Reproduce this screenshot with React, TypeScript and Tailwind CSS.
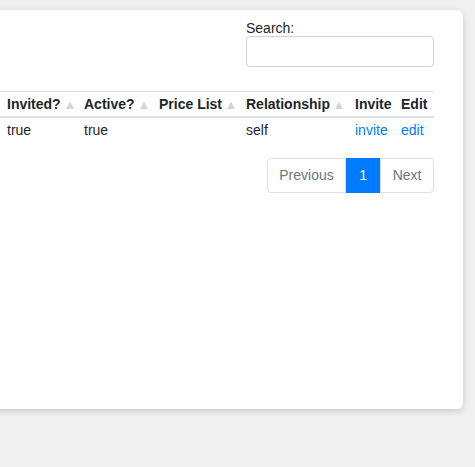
import React from "react";

const font = { fontFamily: '"Liberation Sans", Arial, sans-serif' };

function SortArrow() {
  return (
    <svg width="8" height="8" viewBox="0 0 8 8" className="ml-[5px] mt-[1px] inline-block shrink-0">
      <path d="M4 0.5 L8 8 L0 8 Z" fill="#d4d4d4" />
    </svg>
  );
}

interface Col {
  label: string;
  width: string;
  sortable: boolean;
  first?: boolean;
}

const columns: Col[] = [
  { label: "Invited?", width: "w-[79px]", sortable: true, first: true },
  { label: "Active?", width: "w-[75px]", sortable: true },
  { label: "Price List", width: "w-[87px]", sortable: true },
  { label: "Relationship", width: "w-[109px]", sortable: true },
  { label: "Invite", width: "w-[46px]", sortable: false },
  { label: "Edit", width: "w-[38px]", sortable: false },
];

export default function App() {
  return (
    <div
      className="min-h-[467px] w-[475px] overflow-hidden bg-[#f0f0f0] pt-[10px] text-[14px] text-[#212529]"
      style={font}
    >
      <div className="-ml-[20px] mr-[12px] h-[399px] rounded-[6px] bg-white pl-[20px] pr-[29px] pt-[9px] shadow-[0_2px_7px_rgba(0,0,0,0.16)]">
        {/* Search */}
        <div className="flex justify-end">
          <label className="block w-[188px]">
            <span className="block h-[17px] leading-[18px]">Search:</span>
            <input
              type="search"
              className="block h-[31px] w-[188px] rounded-[4px] border border-[#ced4da] bg-white px-2 outline-none"
            />
          </label>
        </div>

        {/* Table */}
        <table className="mt-[24px] w-full table-fixed border-collapse">
          <thead>
            <tr className="border-t border-b-2 border-t-[#dee2e6] border-b-[#dee2e6]">
              {columns.map((c) => (
                <th
                  key={c.label}
                  className={`${c.width} h-[25px] p-0 pt-[2px] text-left font-bold ${c.first ? "pl-[7px]" : "pl-[5px]"}`}
                >
                  <span className="flex items-center whitespace-nowrap leading-[21px]">
                    {c.label}
                    {c.sortable && <SortArrow />}
                  </span>
                </th>
              ))}
            </tr>
          </thead>
          <tbody>
            <tr>
              <td className="h-[25px] p-0 pl-[7px] pt-[2px] leading-[21px]">true</td>
              <td className="p-0 pl-[5px] pt-[2px] leading-[21px]">true</td>
              <td className="p-0 pl-[5px] pt-[2px] leading-[21px]"></td>
              <td className="p-0 pl-[5px] pt-[2px] leading-[21px]">self</td>
              <td className="p-0 pl-[5px] pt-[2px] leading-[21px]">
                <a href="#" className="text-[#007bff]">invite</a>
              </td>
              <td className="p-0 pl-[5px] pt-[2px] leading-[21px]">
                <a href="#" className="text-[#007bff]">edit</a>
              </td>
            </tr>
          </tbody>
        </table>

        {/* Pagination */}
        <div className="mt-[16px] flex justify-end">
          <div className="flex h-[35px]">
            <span className="flex items-center rounded-l-[4px] border border-[#dee2e6] px-[11.5px] text-[#6c757d]">
              Previous
            </span>
            <span className="flex w-[34px] items-center justify-center border border-[#007bff] bg-[#007bff] text-white">
              1
            </span>
            <span className="flex items-center rounded-r-[4px] border border-[#dee2e6] px-[11.5px] text-[#6c757d]">
              Next
            </span>
          </div>
        </div>
      </div>
    </div>
  );
}
